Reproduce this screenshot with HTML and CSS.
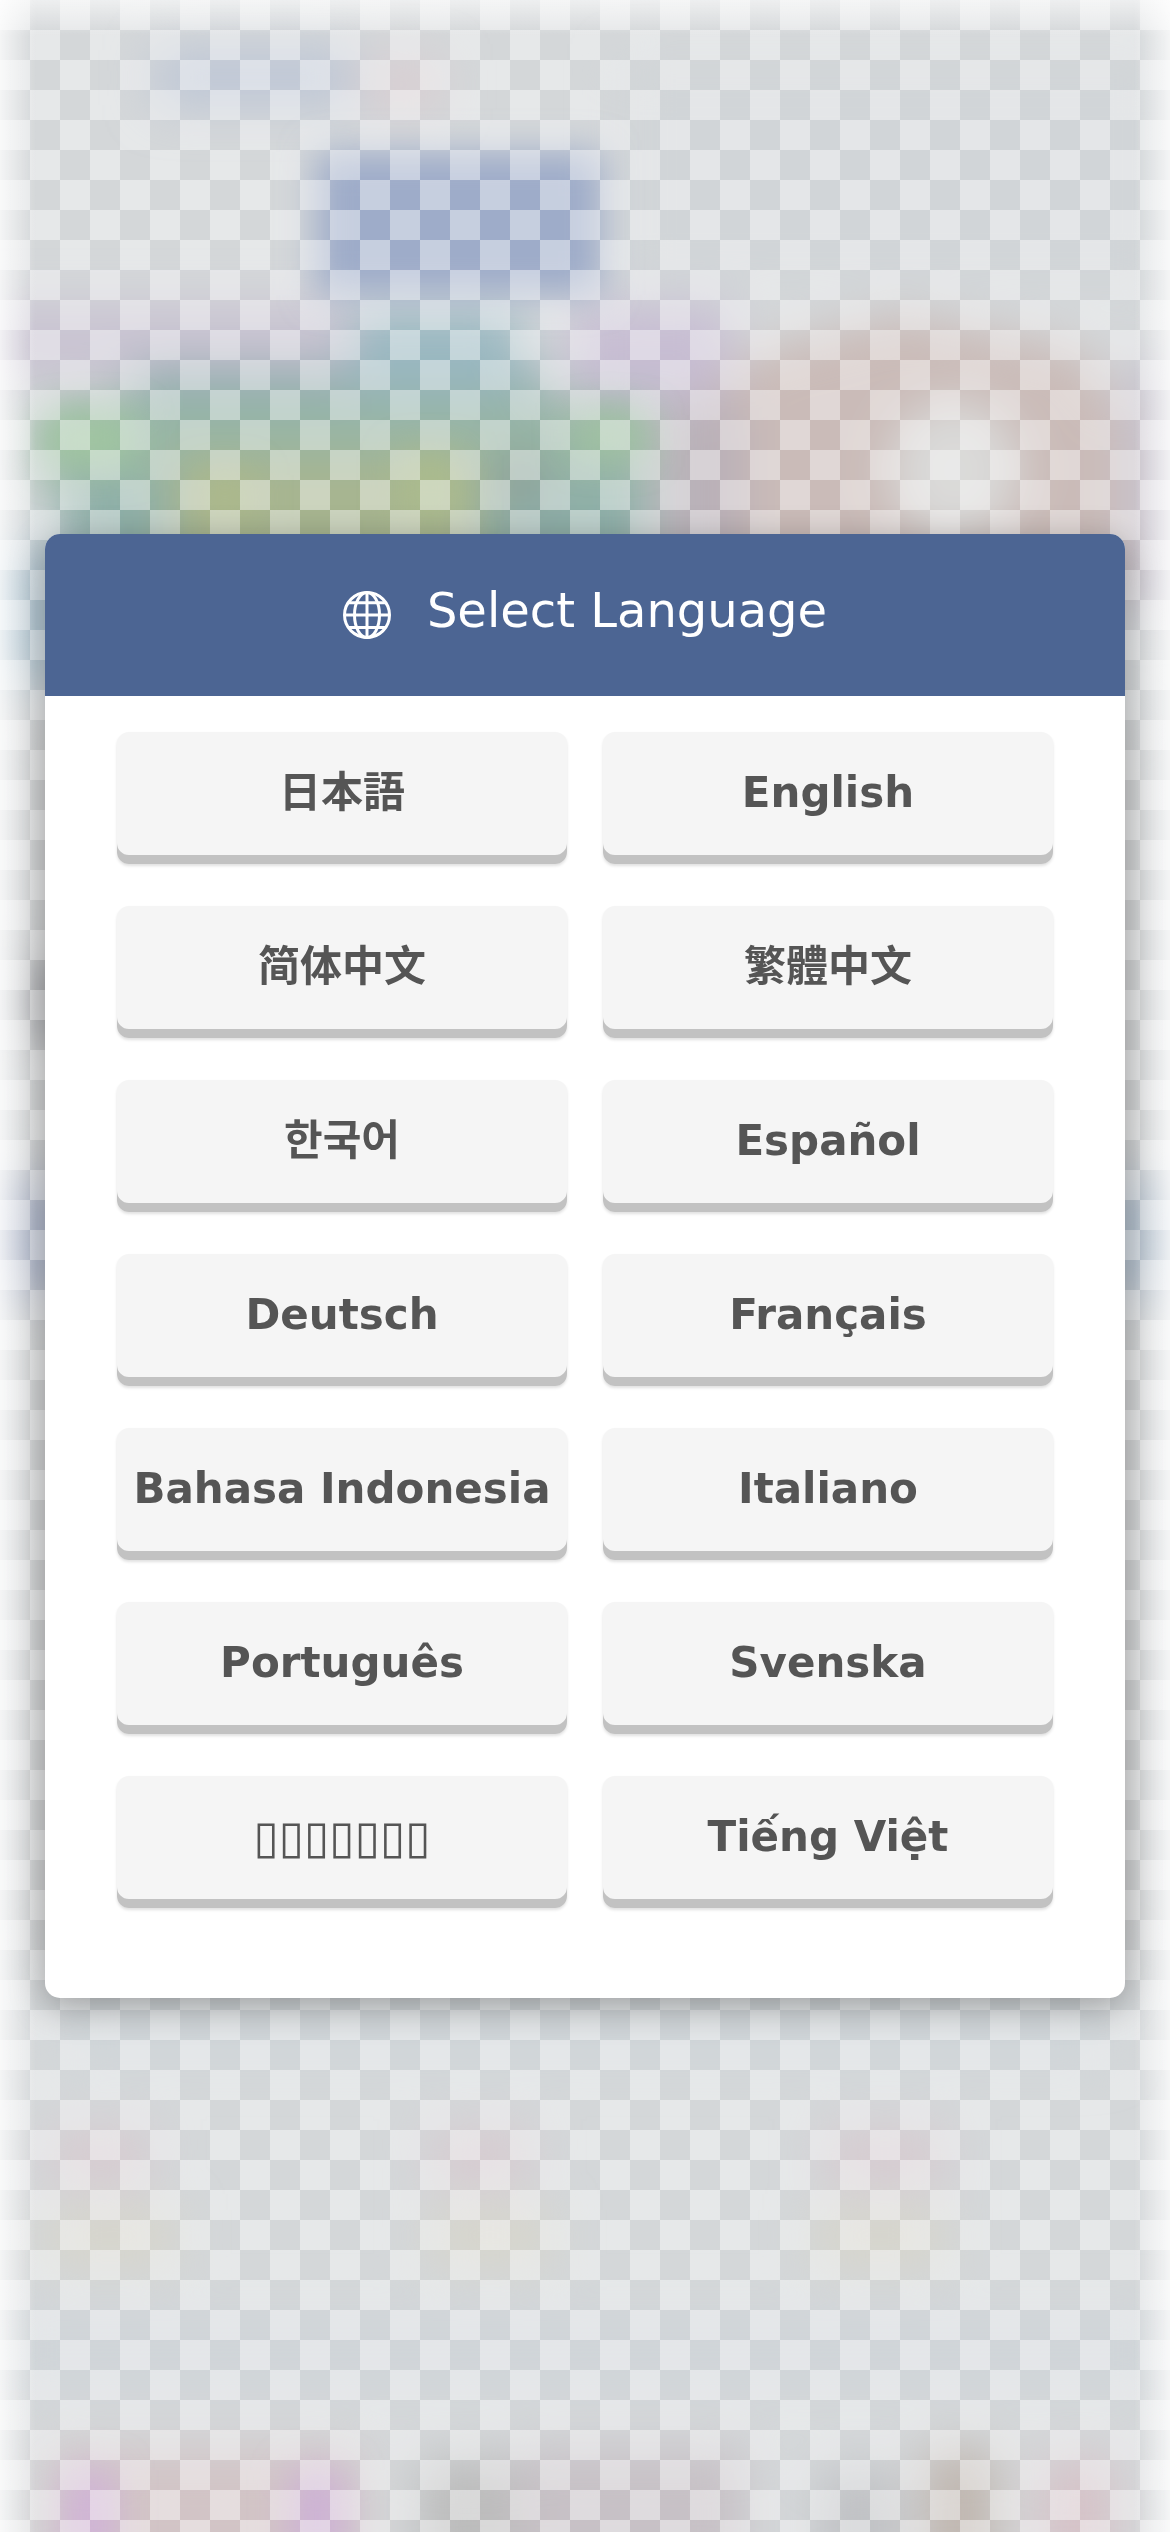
FILE: index.html
```html
<!DOCTYPE html>
<html lang="en">
<head>
<meta charset="utf-8">
<meta name="viewport" content="width=device-width, initial-scale=1">
<title>Select Language</title>
<link rel="stylesheet" href="styles.css">
</head>
<body>
<svg class="scene" viewBox="0 0 1170 2532" preserveAspectRatio="none" aria-hidden="true">
  <defs>
    <filter id="soft" x="-50%" y="-50%" width="200%" height="200%"><feGaussianBlur stdDeviation="24"/></filter>
    <filter id="tight" x="-50%" y="-50%" width="200%" height="200%"><feGaussianBlur stdDeviation="18"/></filter>
  </defs>
  <rect width="1170" height="2532" fill="#d4d7d9"/>
  <g filter="url(#soft)">
    <rect x="620" y="60" width="550" height="230" fill="#d1d5d8"/>
    <rect x="155" y="50" width="200" height="55" fill="#bdc6d6"/>
    <rect x="365" y="60" width="75" height="50" fill="#d9cdd1"/>
    <rect x="-20" y="305" width="370" height="75" fill="#c9c3d2"/>
    <rect x="570" y="305" width="160" height="95" fill="#c7bdd3"/>
    <path d="M760 350L900 315L1080 350L1130 420V590H700V400z" fill="#cabbb8"/>
    <rect x="1125" y="360" width="60" height="250" fill="#c8c5d0"/>
    <ellipse cx="955" cy="470" rx="65" ry="70" fill="#dadad9"/>
    <rect x="660" y="400" width="85" height="200" fill="#b9b0b8"/>
    <rect x="130" y="365" width="420" height="70" fill="#93adb1"/>
    <rect x="350" y="310" width="170" height="80" fill="#9ab8c1"/>
    <rect x="40" y="400" width="610" height="90" fill="#97b6a5"/>
    <rect x="60" y="480" width="590" height="110" fill="#8eafa8"/>
    <rect x="170" y="455" width="310" height="140" fill="#a7b590"/>
    <rect x="495" y="450" width="50" height="60" fill="#8ea09a"/>
    <rect x="-30" y="550" width="120" height="130" fill="#b2c6d1"/>
    <rect x="45" y="720" width="40" height="1230" fill="#cbcbca"/>
    <rect x="1085" y="720" width="40" height="1230" fill="#cbcbca"/>
    <rect x="30" y="960" width="60" height="80" fill="#a0a0a4"/>
    <rect x="-30" y="1180" width="120" height="115" fill="#b0b8ca"/>
    <rect x="1080" y="1180" width="120" height="115" fill="#b2bfcc"/>
    <rect x="60" y="2000" width="1050" height="60" fill="#cfd5d9"/>
    <rect x="50" y="2130" width="100" height="55" fill="#d7cbd0"/>
    <rect x="430" y="2130" width="100" height="55" fill="#d7cbd0"/>
    <rect x="825" y="2130" width="120" height="55" fill="#d7cbd0"/>
    <rect x="45" y="2210" width="130" height="55" fill="#d7d5cb"/>
    <rect x="430" y="2210" width="120" height="55" fill="#d7d5cb"/>
    <rect x="815" y="2210" width="130" height="55" fill="#d7d5cb"/>
    <rect x="0" y="2310" width="1170" height="80" fill="#d0d5d9"/>
    <rect x="50" y="2450" width="310" height="130" fill="#d2c4c6"/>
    <rect x="420" y="2460" width="95" height="120" fill="#bcbcbc"/>
    <rect x="515" y="2450" width="230" height="130" fill="#c7c1c6"/>
    <rect x="820" y="2470" width="80" height="110" fill="#c0c1c4"/>
    <rect x="925" y="2450" width="70" height="130" fill="#bfb5ae"/>
    <rect x="1040" y="2460" width="75" height="120" fill="#d6c2c8"/>
  </g>
  <g filter="url(#tight)">
    <rect x="316" y="152" width="286" height="143" fill="#9eacc9"/>
    <rect x="45" y="415" width="90" height="50" fill="#a1c6a1"/>
    <rect x="575" y="415" width="70" height="40" fill="#a1c3a1"/>
    <rect x="65" y="2470" width="50" height="100" fill="#d0b4d7"/>
    <rect x="290" y="2470" width="55" height="100" fill="#cdb2d5"/>
    <rect x="200" y="475" width="50" height="45" fill="#adba8b"/>
    <rect x="400" y="455" width="60" height="65" fill="#abbb8d"/>
  </g>
</svg>
<main class="page">
  <section class="dialog" aria-labelledby="dialog-title">
    <header class="dialog-header">
      <svg class="globe" viewBox="0 0 48 48" aria-hidden="true">
        <circle cx="24" cy="24" r="22.500"/>
        <ellipse cx="24" cy="24" rx="12.500" ry="22.500"/>
        <path d="M24 1.500V46.500M1.500 24H46.500M5.500 11.800H42.500M5.500 36.600H42.500"/>
      </svg>
      <h1 class="title" id="dialog-title">Select Language</h1>
    </header>
    <div class="languages">
      <button class="language" type="button" lang="ja">日本語</button>
      <button class="language" type="button" lang="en">English</button>
      <button class="language" type="button" lang="zh-Hans">简体中文</button>
      <button class="language" type="button" lang="zh-Hant">繁體中文</button>
      <button class="language" type="button" lang="ko">한국어</button>
      <button class="language" type="button" lang="es">Español</button>
      <button class="language" type="button" lang="de">Deutsch</button>
      <button class="language" type="button" lang="fr">Français</button>
      <button class="language" type="button" lang="id">Bahasa Indonesia</button>
      <button class="language" type="button" lang="it">Italiano</button>
      <button class="language" type="button" lang="pt">Português</button>
      <button class="language" type="button" lang="sv">Svenska</button>
      <button class="language language-plain" type="button">▯▯▯▯▯▯▯</button>
      <button class="language" type="button" lang="vi">Tiếng Việt</button>
    </div>
  </section>
</main>
</body>
</html>
```
FILE: styles.css
```css
* {
  box-sizing: border-box;
}

body {
  margin: 0;
  background: #fff;
  font-family: "DejaVu Sans", "Noto Sans CJK JP", sans-serif;
}

.scene {
  position: fixed;
  inset: 0;
  width: 100%;
  height: 100%;
}

/* Checkerboard veil over the scene, fading to white at the top and sides */
.page {
  position: relative;
  display: flex;
  align-items: center;
  justify-content: center;
  min-height: 100vh;
  padding: 45px;
  background:
    linear-gradient(to right, rgba(255, 255, 255, 0.75), transparent 36px),
    linear-gradient(to left, rgba(255, 255, 255, 0.75), transparent 36px),
    linear-gradient(to bottom, rgba(255, 255, 255, 0.6), transparent 36px),
    conic-gradient(transparent 25%, rgba(255, 255, 255, 0.42) 0 50%, transparent 0 75%, rgba(255, 255, 255, 0.42) 0) 0 0 / 60px 60px;
}

.dialog {
  width: 100%;
  overflow: hidden;
  border-radius: 15px;
  background: #fff;
  box-shadow: 0 9px 36px rgba(0, 0, 0, 0.32);
}

.dialog-header {
  display: flex;
  align-items: center;
  justify-content: center;
  gap: 36px;
  height: 162px;
  background: #4c6593;
  color: #fff;
}

.globe {
  width: 48px;
  height: 48px;
  fill: none;
  stroke: currentColor;
  stroke-width: 3;
}

.title {
  margin: 0 0 10px;
  font-size: 48px;
  font-weight: 400;
  line-height: 60px;
}

.languages {
  display: grid;
  grid-template-columns: 1fr 1fr;
  gap: 42px 36px;
  padding: 36px 72px 90px;
}

.language {
  height: 132px;
  padding: 0 0 10px;
  border: 0;
  border-radius: 12px;
  background: #f5f5f5;
  box-shadow: inset 0 -9px #c2c2c2, 0 2px 3px rgba(0, 0, 0, 0.12);
  color: #555;
  font: inherit;
  font-size: 42px;
  font-weight: 700;
  line-height: 48px;
  white-space: nowrap;
}

.language-plain {
  font-size: 46px;
  font-weight: 400;
}

.language:lang(zh-Hans) {
  font-family: "DejaVu Sans", "Noto Sans CJK SC", sans-serif;
}

.language:lang(zh-Hant) {
  font-family: "DejaVu Sans", "Noto Sans CJK TC", sans-serif;
}

.language:lang(ko) {
  font-family: "DejaVu Sans", "Noto Sans CJK KR", sans-serif;
}
```
